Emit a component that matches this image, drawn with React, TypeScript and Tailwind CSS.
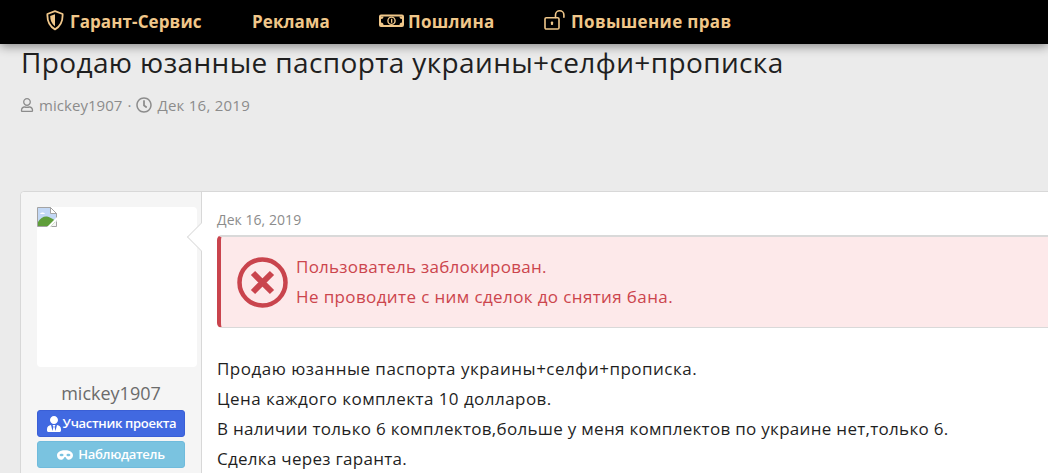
import React from "react";
import { FaRegUser, FaRegClock, FaUserTie, FaMask } from "react-icons/fa";

const Shield = () => (
  <svg width="18" height="24" viewBox="0 0 18 24" fill="none" className="shrink-0">
    <path d="M9 1.2 L16.6 4 C16.9 10.5 14.6 16.2 9 19.4 C3.4 16.2 1.1 10.5 1.4 4 Z" stroke="#f0c78a" strokeWidth="1.8" strokeLinejoin="round" />
    <path d="M9 4.2 L4.2 6 C4.2 10.2 5.6 14 9 16.2 Z" fill="#f0c78a" />
  </svg>
);

const Money = () => (
  <svg width="25" height="21" viewBox="0 0 25 21" fill="none" className="shrink-0">
    <rect x="1" y="3.5" width="23" height="10.5" rx="1" stroke="#f0c78a" strokeWidth="2" />
    <circle cx="12.5" cy="8.75" r="3.6" stroke="#f0c78a" strokeWidth="1.4" />
    <rect x="12" y="6.8" width="1.3" height="4" fill="#f0c78a" />
    <path d="M2 4.5h2.5a2.5 2.5 0 0 1-2.5 2.5zM23 4.5h-2.5a2.5 2.5 0 0 0 2.5 2.5zM2 13h2.5a2.5 2.5 0 0 0-2.5-2.5zM23 13h-2.5a2.5 2.5 0 0 1 2.5-2.5z" fill="#f0c78a" />
  </svg>
);

const LockOpen = () => (
  <svg width="23" height="24" viewBox="0 0 23 24" fill="none" className="shrink-0">
    <rect x="1" y="7.8" width="14" height="11.2" rx="1.3" stroke="#f0c78a" strokeWidth="1.6" />
    <path d="M11.5 7.5V5a4.2 4.2 0 0 1 8.4 0v2.2" stroke="#f0c78a" strokeWidth="1.6" strokeLinecap="round" />
    <rect x="6.9" y="11.4" width="2.2" height="3.6" rx="0.8" fill="#f0c78a" />
  </svg>
);

const BrokenImage = () => (
  <svg width="20" height="20" viewBox="0 0 20 20" className="absolute left-0 top-0">
    <path d="M0.5 0.5H13.5L19.5 6.5V19.5H0.5Z" fill="#c3d8f5" stroke="#a3a3a3" />
    <path d="M13.5 0.5V6.5H19.5Z" fill="#fff" stroke="#a3a3a3" />
    <path d="M3 7c1-2 4-2 5 0z" fill="#fff" />
    <path d="M1 19V15C3 11 7 9 10 9.5C12.5 10 15 11.5 18 13.5V19Z" fill="#5f9e3a" />
    <path d="M10 20L20 10V13L13 20Z" fill="#fff" />
    <path d="M13 20L20 13V20Z" fill="#f5f5f5" />
    <path d="M14.5 19.5H19.5V14.5" fill="none" stroke="#a3a3a3" />
  </svg>
);

const NavItem = ({ icon, label, className, labelClass }: { icon?: React.ReactNode; label: string; className: string; labelClass: string }) => (
  <div className={`flex items-center ${className}`}>
    {icon}
    <span className={labelClass}>{label}</span>
  </div>
);

export default function App() {
  return (
    <div className="w-[1048px] h-[473px] overflow-hidden bg-[#ebebeb] [font-family:'Open_Sans','Noto_Sans',sans-serif]">
      <nav className="relative z-10 flex h-11 items-center bg-black pl-[46px] text-[17px] font-bold text-[#f0c78a] shadow-[0_2px_10px_rgba(0,0,0,0.45)]">
        <NavItem icon={<Shield />} label="Гарант-Сервис" labelClass="tracking-[0.1px]" className="w-[206px] gap-[6px]" />
        <NavItem label="Реклама" labelClass="tracking-[0.1px]" className="w-[127px]" />
        <NavItem icon={<Money />} label="Пошлина" labelClass="tracking-[0.3px]" className="w-[165px] gap-[4px]" />
        <NavItem icon={<LockOpen />} label="Повышение прав" labelClass="tracking-[0.35px]" className="gap-[4px]" />
      </nav>

      <main className="pl-5">
        <h1 className="ml-px -mt-[1px] text-[28px] leading-[39px] font-normal text-[#1f1f1f] tracking-[0.37px] whitespace-nowrap">
          Продаю юзанные паспорта украины+селфи+прописка
        </h1>
        <div className="mt-[13px] flex h-[20px] items-center text-[15px] text-[#8c8c8c]">
          <FaRegUser className="text-[14px] mr-[5px]" />
          <span className="tracking-[0.05px]">mickey1907</span>
          <span className="mx-[5px]">·</span>
          <FaRegClock className="text-[16px] mr-[5px]" />
          <span className="tracking-[0.25px]">Дек 16, 2019</span>
        </div>

        <article className="mt-[76px] flex h-[400px] w-[1100px] rounded-t-[4px] border border-[#d8d8d8] bg-white">
          <aside className="relative flex w-[181px] shrink-0 flex-col rounded-tl-[4px] border-r border-[#d8d8d8] bg-[#f5f5f5] pl-[16px] pt-[15px]">
            <div className="relative h-[160px] w-[160px] rounded-[4px] bg-white">
              <BrokenImage />
            </div>
            <div className="absolute left-[170px] top-[35px] h-[20px] w-[20px] rotate-45 border-b border-l border-[#dfdfdf] bg-white" />
            <div className="mt-[14px] w-[148px] text-center text-[18px] leading-[25px] text-[#6b6b6b]">mickey1907</div>
            <div className="mt-[4px] flex h-[27px] w-[148px] items-center justify-center gap-[1px] rounded-[3px] border border-[#3a5fd6] bg-[#4169e1] text-[13px] font-semibold tracking-[-0.3px] text-white">
              <FaUserTie className="text-[16px]" />
              <span>Участник проекта</span>
            </div>
            <div className="mt-[4px] flex h-[27px] w-[148px] items-center justify-center gap-[5px] rounded-[3px] border border-[#6fbbdc] bg-[#7ac3e0] text-[13px] font-semibold tracking-[-0.3px] text-white">
              <FaMask className="text-[16px]" />
              <span>Наблюдатель</span>
            </div>
          </aside>

          <section className="flex-1 pl-[15px]">
            <div className="mt-[18px] text-[14px] leading-[20px] tracking-[0.05px] text-[#8c8c8c]">Дек 16, 2019</div>
            <div className="mt-[5px] flex h-[93px] items-center rounded-[5px] border-l-4 border-t-2 border-b border-[#d9d9d9] border-l-[#c9444d] bg-[#fde9ea] pl-[16px]">
              <svg width="51" height="51" viewBox="0 0 51 51" fill="none" className="shrink-0">
                <circle cx="25.5" cy="25.5" r="23" stroke="#c9444d" strokeWidth="4.5" />
                <path d="M16 16 L35 35 M35 16 L16 35" stroke="#c9444d" strokeWidth="6" />
              </svg>
              <div className="ml-[8px] text-[17px] leading-[30px] text-[#cc454d]">
                <div className="tracking-[0.25px]">Пользователь заблокирован.</div>
                <div className="tracking-[0.38px]">Не проводите с ним сделок до снятия бана.</div>
              </div>
            </div>
            <div className="mt-[26px] text-[17px] leading-[30px] text-[#1f1f1f]">
              <div className="tracking-[0.49px]">Продаю юзанные паспорта украины+селфи+прописка.</div>
              <div className="tracking-[0.45px]">Цена каждого комплекта 10 долларов.</div>
              <div className="tracking-[0.3px]">В наличии только 6 комплектов,больше у меня комплектов по украине нет,только 6.</div>
              <div className="tracking-[0.28px]">Сделка через гаранта.</div>
            </div>
          </section>
        </article>
      </main>
    </div>
  );
}
